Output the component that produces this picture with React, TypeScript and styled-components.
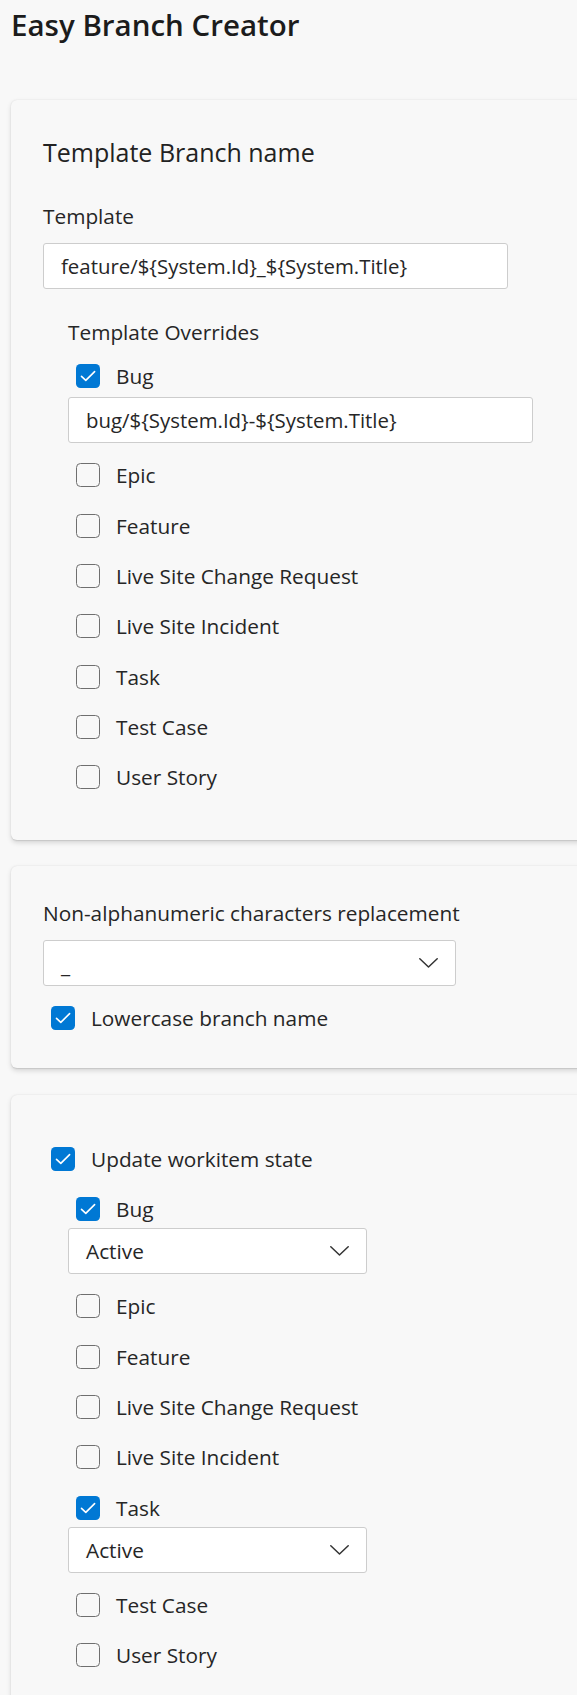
import React from "react";
import styled, { createGlobalStyle } from "styled-components";

const GlobalStyle = createGlobalStyle`
  html, body {
    margin: 0;
    padding: 0;
    background: #f8f8f8;
    overflow-x: hidden;
  }
  body {
    font-family: "Open Sans", "Noto Sans", "DejaVu Sans", sans-serif;
    color: #262626;
  }
  * { box-sizing: border-box; }
`;

const Page = styled.div`
  padding: 5px 0 40px 11px;
  overflow: hidden;
  width: 100%;
`;

const Title = styled.h1`
  margin: 0 0 55px;
  font-size: 29.5px;
  font-weight: 600;
  line-height: 40px;
  color: #1c1c1c;
`;

const Stack = styled.div`
  display: flex;
  flex-direction: column;
  gap: 26.5px;
`;

const Card = styled.section<{ $pt: number; $pb: number }>`
  width: 620px;
  background: #f8f8f8;
  border-radius: 6px;
  box-shadow: 0 2.4px 5.4px 0 rgba(0, 0, 0, 0.13), 0 0.45px 1.35px 0 rgba(0, 0, 0, 0.11);
  padding: ${(p) => p.$pt}px 0 ${(p) => p.$pb}px 32px;
  display: flex;
  flex-direction: column;
`;

const Heading = styled.h2`
  margin: 0 0 32px;
  font-size: 25px;
  font-weight: 400;
  line-height: 34px;
  color: #222;
`;

const Label = styled.div<{ $mb?: number }>`
  font-size: 20.8px;
  line-height: 30px;
  color: #262626;
  margin-bottom: ${(p) => p.$mb ?? 12}px;
`;

const TextInput = styled.input<{ $mt?: number }>`
  display: block;
  width: 465px;
  height: 46px;
  margin: ${(p) => p.$mt ?? 0}px 0 0;
  padding: 0 17px;
  border: 1px solid #cdcdcd;
  border-radius: 3px;
  background: #ffffff;
  font-family: inherit;
  font-size: 20.4px;
  color: #262626;
  outline: none;
`;

const Select = styled.div<{ $w: number; $mt?: number }>`
  width: ${(p) => p.$w}px;
  height: 46px;
  margin-top: ${(p) => p.$mt ?? 0}px;
  border: 1px solid #cdcdcd;
  border-radius: 3px;
  background: #ffffff;
  display: flex;
  align-items: center;
  justify-content: space-between;
  padding: 0 17px;
  font-size: 20.8px;
  line-height: 30px;
  color: #262626;
`;

const SelectValue = styled.span<{ $low?: boolean }>`
  position: relative;
  top: ${(p) => (p.$low ? 2 : 0)}px;
`;

const Chevron = styled.svg`
  width: 19px;
  height: 10px;
  flex: none;
`;

const Indent = styled.div<{ $mt: number }>`
  margin-left: 25px;
  margin-top: ${(p) => p.$mt}px;
  display: flex;
  flex-direction: column;
`;

const List = styled.div`
  display: flex;
  flex-direction: column;
  gap: 14.33px;
`;

const Item = styled.div`
  display: flex;
  flex-direction: column;
`;

const Row = styled.label`
  height: 36px;
  display: flex;
  align-items: center;
  gap: 16px;
  padding-left: 8px;
  font-size: 20.8px;
  line-height: 30px;
  color: #262626;
`;

const Box = styled.span<{ $checked: boolean }>`
  width: 24px;
  height: 24px;
  flex: none;
  border-radius: 4.5px;
  display: flex;
  align-items: center;
  justify-content: center;
  background: ${(p) => (p.$checked ? "#0078d4" : "transparent")};
  border: ${(p) => (p.$checked ? "none" : "1.5px solid #6f6f6f")};
`;

const Spacer = styled.div<{ $h: number }>`
  height: ${(p) => p.$h}px;
`;

function Check({ checked, label }: { checked: boolean; label: string }) {
  return (
    <Row>
      <Box $checked={checked}>
        {checked && (
          <svg width="24" height="24" viewBox="0 0 24 24">
            <path d="M5.5 12.3 L9.8 16.4 L18.6 7.6" fill="none" stroke="#fff" strokeWidth="1.6" strokeLinecap="round" strokeLinejoin="round" />
          </svg>
        )}
      </Box>
      <span>{label}</span>
    </Row>
  );
}

function Dropdown({ value, width, mt, low }: { value: string; width: number; mt?: number; low?: boolean }) {
  return (
    <Select $w={width} $mt={mt}>
      <SelectValue $low={low}>{value}</SelectValue>
      <Chevron viewBox="0 0 19 10">
        <path d="M0.8 0.8 L9.5 9 L18.2 0.8" fill="none" stroke="#333" strokeWidth="1.5" strokeLinecap="round" strokeLinejoin="round" />
      </Chevron>
    </Select>
  );
}

const types = ["Bug", "Epic", "Feature", "Live Site Change Request", "Live Site Incident", "Task", "Test Case", "User Story"];

export default function App() {
  const overrides: Record<string, string> = { Bug: "bug/${System.Id}-${System.Title}" };
  const states: Record<string, string> = { Bug: "Active", Task: "Active" };
  return (
    <>
      <GlobalStyle />
      <Page>
        <Title>Easy Branch Creator</Title>
        <Stack>
          <Card $pt={35} $pb={44.7}>
            <Heading>Template Branch name</Heading>
            <Label>Template</Label>
            <TextInput readOnly value={"feature/${System.Id}_${System.Title}"} />
            <Indent $mt={28}>
              <Label $mb={11}>Template Overrides</Label>
              <List>
                {types.map((t) => (
                  <Item key={t}>
                    <Check checked={!!overrides[t]} label={t} />
                    {overrides[t] && <TextInput readOnly value={overrides[t]} $mt={3} />}
                  </Item>
                ))}
              </List>
            </Indent>
          </Card>

          <Card $pt={32} $pb={32}>
            <Label>Non-alphanumeric characters replacement</Label>
            <Dropdown value="_" width={413} low />
            <Spacer $h={14} />
            <Check checked label="Lowercase branch name" />
          </Card>

          <Card $pt={46} $pb={40}>
            <Check checked label="Update workitem state" />
            <Indent $mt={14}>
              <List>
                {types.map((t) => (
                  <Item key={t}>
                    <Check checked={!!states[t]} label={t} />
                    {states[t] && <Dropdown value={states[t]} width={299} mt={1} />}
                  </Item>
                ))}
              </List>
            </Indent>
          </Card>
        </Stack>
      </Page>
    </>
  );
}
